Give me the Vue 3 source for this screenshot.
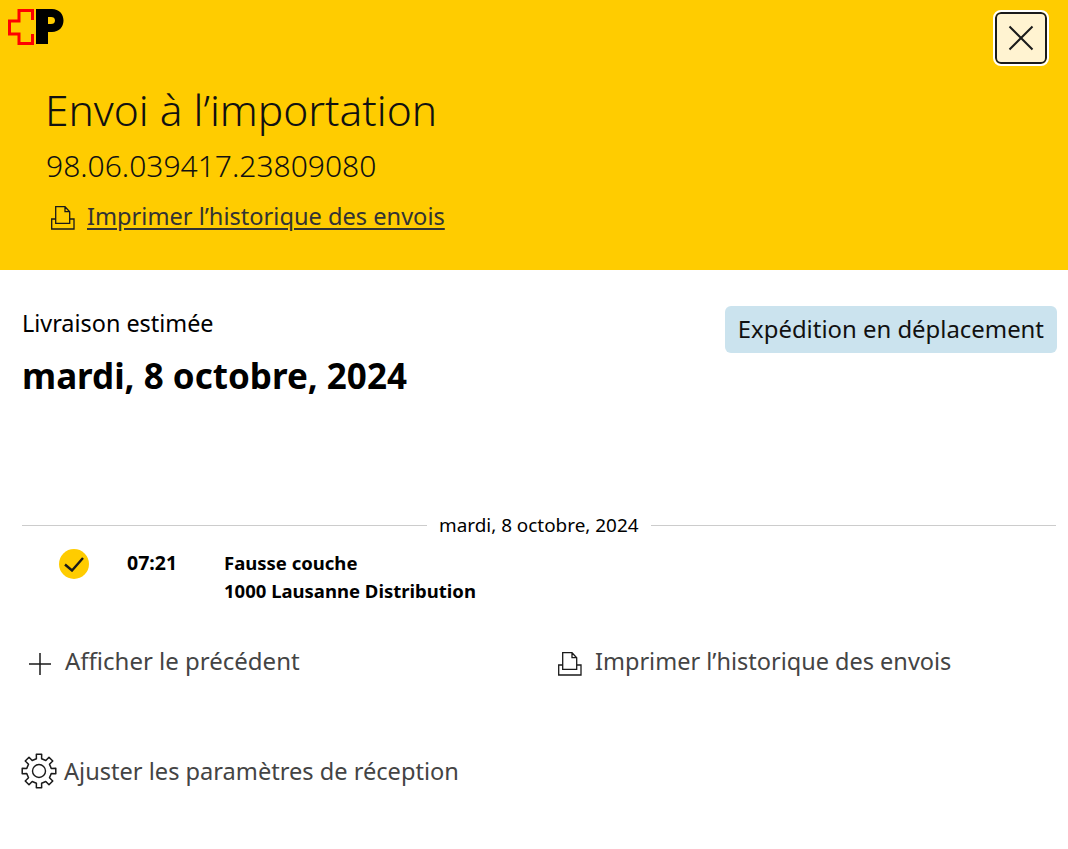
<template>
  <div class="page">
    <header class="head">
      <div class="top">
        <svg class="logo" width="56" height="36" viewBox="0 0 56 36">
          <path d="M24.500 11V1.500H11V12H1.500V25H11V34.500H24.500V25" fill="none" stroke="#f00" stroke-width="3" />
          <path d="M28 0H44C51 0 55.500 5 55.500 11.500S51 23 44 23H40V35H28zM40 8V15H43C45.500 15 47 14 47 11.500S45.500 8 43 8z" fill="#000" fill-rule="evenodd" />
        </svg>
        <button class="close" aria-label="Fermer">
          <svg width="26" height="26" viewBox="0 0 26 26">
            <path d="M1.500 1.500l23 23M24.500 1.500l-23 23" stroke="#1a1a1a" stroke-width="2" fill="none" />
          </svg>
        </button>
      </div>
      <div class="head-text">
        <h1>Envoi à l’importation</h1>
        <div class="number">98.06.039417.23809080</div>
        <a class="print-top">
          <svg width="26" height="26" viewBox="0 0 26 26">
            <path :d="printIcon" fill="none" stroke="#1a1a1a" stroke-width="1.300" />
          </svg>
          <span>Imprimer l’historique des envois</span>
        </a>
      </div>
    </header>

    <main class="content">
      <section class="summary">
        <div>
          <div class="est-label">Livraison estimée</div>
          <div class="est-date">mardi, 8 octobre, 2024</div>
        </div>
        <div class="badge">Expédition en déplacement</div>
      </section>

      <div class="day-line"><span>mardi, 8 octobre, 2024</span></div>

      <div class="event">
        <span class="check">
          <svg width="20" height="16" viewBox="0 0 20 16">
            <path d="M1 8.500l7 6L19 2" fill="none" stroke="#1a1a1a" stroke-width="2.400" />
          </svg>
        </span>
        <span class="time">07:21</span>
        <div class="event-text">
          <div>Fausse couche</div>
          <div>1000 Lausanne Distribution</div>
        </div>
      </div>

      <div class="actions">
        <a class="action">
          <svg width="26" height="26" viewBox="0 0 26 26">
            <path d="M13 2v22M2 13h22" stroke="#1a1a1a" stroke-width="1.500" fill="none" />
          </svg>
          <span>Afficher le précédent</span>
        </a>
        <a class="action print-bottom">
          <svg width="26" height="26" viewBox="0 0 26 26">
            <path :d="printIcon" fill="none" stroke="#1a1a1a" stroke-width="1.300" />
          </svg>
          <span>Imprimer l’historique des envois</span>
        </a>
      </div>

      <a class="action settings">
        <svg width="36" height="36" viewBox="0 0 36 36">
          <path :d="gearPath" fill="none" stroke="#1a1a1a" stroke-width="1.500" stroke-linejoin="round" />
          <circle cx="18" cy="18" r="6.500" fill="none" stroke="#1a1a1a" stroke-width="1.400" />
        </svg>
        <span>Ajuster les paramètres de réception</span>
      </a>
    </main>
  </div>
</template>

<script setup>
const printIcon =
  "M5.700 18.300V1.700H15L19.700 6.700V18.300ZM15 1.700V6.700H19.700M5.700 14H1.700V24H24V14H19.700";

// 8 teeth, first one pointing up
const polar = (r, deg) => {
  const a = (deg * Math.PI) / 180;
  return (18 + r * Math.sin(a)).toFixed(2) + " " + (18 - r * Math.cos(a)).toFixed(2);
};
let gearPath = "";
for (let i = 0; i < 8; i++) {
  const a = i * 45;
  gearPath += (i == 0 ? "M" : "L") + polar(12.5, a - 12);
  gearPath += "L" + polar(17, a - 9);
  gearPath += "L" + polar(17, a + 9);
  gearPath += "L" + polar(12.5, a + 12);
}
gearPath += "Z";
</script>

<style>
html,
body {
  margin: 0;
  background: #fff;
}
</style>

<style scoped>
.page {
  width: 1068px;
  min-height: 849px;
  font-family: "Noto Sans", "Open Sans", sans-serif;
  color: #000;
}
.head {
  height: 270px;
  box-sizing: border-box;
  background: #fc0;
  padding: 9px 21px 0 8px;
}
.top {
  display: flex;
  justify-content: space-between;
  align-items: flex-start;
  height: 75px;
}
.close {
  width: 52px;
  height: 52px;
  margin-top: 3px;
  padding: 0;
  box-sizing: border-box;
  background: #fff3d1;
  border: 2px solid #1a1a1a;
  border-radius: 6px;
  outline: 2px solid #fff;
  display: flex;
  align-items: center;
  justify-content: center;
}
.head-text {
  padding-left: 37px;
}
h1 {
  margin: 0;
  font-size: 42.500px;
  font-weight: 300;
  line-height: 52px;
  color: #111;
}
.number {
  margin-top: 12px;
  margin-left: 1px;
  font-size: 30px;
  font-weight: 300;
  line-height: 36px;
  color: #111;
}
.print-top {
  margin-top: 17px;
  margin-left: -2px;
  display: flex;
  align-items: center;
  gap: 11px;
  font-size: 23.600px;
  line-height: 30px;
  color: #333;
}
.print-top span {
  text-decoration: underline;
  text-underline-offset: 3px;
}
.print-top svg {
  margin-left: 7px;
  margin-top: 4px;
}
.content {
  padding: 0 11px 0 22px;
}
.summary {
  display: flex;
  justify-content: space-between;
  align-items: flex-start;
  padding-top: 35px;
  height: 214px;
  box-sizing: border-box;
}
.est-label {
  font-size: 23.400px;
  line-height: 36px;
}
.est-date {
  margin-top: 13px;
  font-size: 35px;
  font-weight: 700;
  line-height: 44px;
}
.badge {
  margin-top: 1px;
  background: #cbe3ee;
  border-radius: 6px;
  font-size: 23.900px;
  line-height: 45px;
  padding: 0 13px 2px;
  color: #111;
}
.day-line {
  display: flex;
  align-items: center;
  gap: 12px;
  margin-top: 29px;
  margin-right: 1px;
  font-size: 18.900px;
  line-height: 24px;
}
.day-line::before,
.day-line::after {
  content: "";
  flex: 1;
  height: 1px;
  background: #ccc;
}
.day-line::before {
  flex: 0 0 405px;
}
.event {
  display: flex;
  align-items: flex-start;
  margin-top: 12px;
  font-size: 18.500px;
  font-weight: 700;
  line-height: 28px;
}
.check {
  margin-left: 37px;
  width: 30px;
  height: 30px;
  border-radius: 50%;
  background: #fc0;
  display: flex;
  align-items: center;
  justify-content: center;
}
.time {
  margin-left: 38px;
  width: 97px;
  font-size: 19.500px;
}
.actions {
  display: grid;
  grid-template-columns: 530px 1fr;
  margin-top: 40px;
}
.action {
  display: flex;
  align-items: center;
  gap: 12px;
  font-size: 24px;
  line-height: 32px;
  color: #444;
}
.actions svg {
  margin-top: 5px;
  margin-left: 5px;
}
.print-bottom {
  font-size: 23.500px;
}
.settings {
  margin-top: 76px;
  margin-left: -1px;
  gap: 6px;
  font-size: 23.600px;
}
.settings span {
  margin-left: 1px;
}
</style>
